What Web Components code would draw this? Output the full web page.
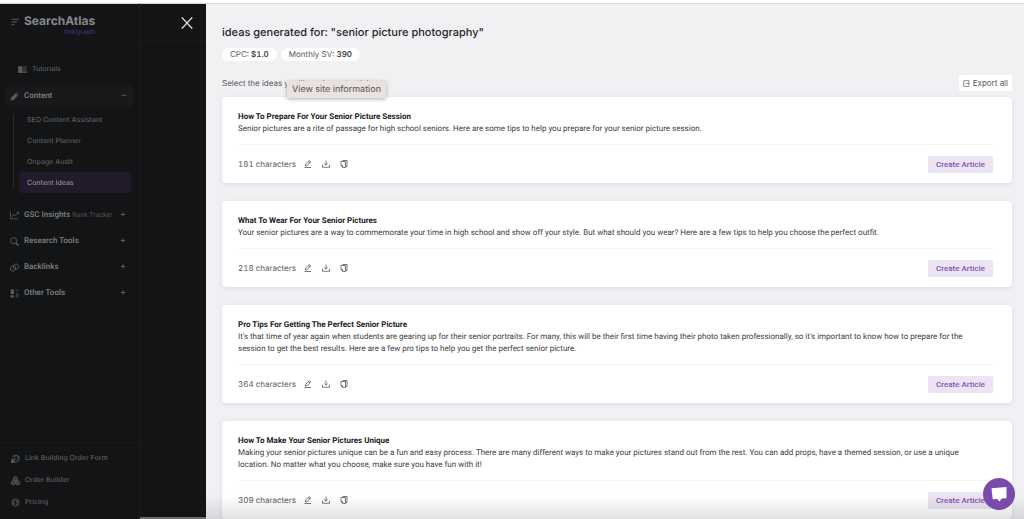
<!DOCTYPE html>
<html lang="en">
<head>
<meta charset="utf-8">
<title>SearchAtlas – Content Ideas</title>
<style>
  html, body { margin: 0; height: 100%; }
  body { --card-font: Roboto, Inter, sans-serif; background: #f1f1f4; font-family: Inter, "Liberation Sans", sans-serif; font-size: 8px; line-height: 12px; font-variant-numeric: tabular-nums; text-rendering: geometricPrecision; overflow: hidden; }
</style>
</head>
<body>
<app-shell>
  <side-nav slot="nav"></side-nav>
  <ideas-panel slot="panel"></ideas-panel>
  <chat-button slot="chat"></chat-button>
</app-shell>

<script>
const ICONS = {
  menu: '<path d="M1 2.500h15M1 8h11M1 13.500h6" stroke-width="2.200"/>',
  book: '<path d="M1 3h6v10H1z" fill="currentColor"/><path d="M9 3h6v10H9z" fill="currentColor" opacity=".45"/><path d="M0 13h16"/>',
  pencil: '<path d="M1 15l1-5 8-8 4 4-8 8zM11 1l1-1 4 4-1 1z" fill="currentColor" stroke="none"/>',
  chart: '<path d="M1 1v13h14M4 10l3-4 3 2 5-6M12 2h3v3"/>',
  search: '<circle cx="6.500" cy="6.500" r="5.500"/><path d="M10.500 10.500l5 5" stroke-width="2.600"/>',
  link: '<ellipse cx="5.500" cy="9.500" rx="4.500" ry="5" transform="rotate(25 5.500 9)"/><ellipse cx="10.500" cy="6.500" rx="4.500" ry="5" transform="rotate(25 10.500 7)"/>',
  blocks: '<path d="M1 1h6v8H1zM1 11h6v4H1z" fill="currentColor" stroke="none"/><path d="M10 1h5v3h-5zM10 7h5v8h-5z" fill="currentColor" stroke="none" opacity=".45"/>',
  order: '<path d="M3 6a6 6 0 1 1 6 8M6 6a3.500 3.500 0 1 1 4 4"/><path d="M1 15l1-6 5 5zM5 11l3-3" fill="currentColor" stroke-width="2"/>',
  cubes: '<path d="M8 1l3.500 2v4L8 9 4.500 7V3zM4 8l3.500 2v4L4 16 .5 14v-4zM12 8l3.500 2v4L12 16l-3.500-2v-4z" fill="currentColor" fill-opacity=".5"/>',
  coin: '<circle cx="8" cy="8" r="7" fill="currentColor" stroke="none" opacity=".65"/><path d="M10.500 5.500C9 4 5.500 4.500 5.500 6.200c0 2.300 5 1.300 5 3.600 0 1.700-3.500 2.200-5 .7M8 3v10" stroke="#131416"/>',
  edit: '<path d="M2.500 12l.7-3.500L10.500 1.200 13.500 4.200 6.200 11.300zM8.800 3l3 3M1 15h13"/>',
  download: '<path d="M8 1v9M4.800 7L8 10.200 11.200 7M1 9.500v5h14v-5"/>',
  copy: '<path d="M5 1h9v12h-2.500M2 3h9v12H6L2 11.500z"/><path d="M2 11h4v4z" fill="currentColor" stroke="none"/>',
  exit: '<path d="M13.500 5V1.500h-12v13h12V11M6 8h9M12.500 5.500L15 8l-2.500 2.500"/>',
  close: '<path d="M1 .5l14 15M15 .5L1 15.500" stroke-width="1.900"/>',
  chat: '<path d="M.5 2.200L15.500 1v11.200l-4.800.4L8.400 15.500 6.300 13l-4.600.2z" fill="#fff" stroke="none"/>'
};

function define(name, css, html, setup) {
  const template = document.createElement('template');
  template.innerHTML = `<style>*{box-sizing:border-box}${css}</style>${html}`;
  customElements.define(name, class extends HTMLElement {
    constructor() {
      super();
      this.attachShadow({ mode: 'open' }).append(template.content.cloneNode(true));
    }
    connectedCallback() { if (setup) setup.call(this, this.shadowRoot); }
  });
}

define('ui-icon', `
  :host { display: inline-flex; flex: none; width: 9px; height: 9px; }
  svg { width: 100%; height: 100%; fill: none; stroke: currentColor; stroke-width: 1.500; overflow: visible; }`,
  '<svg viewBox="0 0 16 16" aria-hidden="true"></svg>',
  function (root) { root.querySelector('svg').innerHTML = ICONS[this.getAttribute('name')]; });

define('nav-item', `
  :host { display: block; min-width: 0; color: #7f8082; font-family: var(--card-font); font-weight: 500; }
  a { display: flex; align-items: center; gap: 5px; height: 22px; padding: 0 7px 0 5px; border-radius: 3px; color: inherit; text-decoration: none; white-space: nowrap; }
  .mark { margin-left: auto; font: 400 9px/12px Inter, sans-serif; color: #68696b; }
  :host([open]) a { background: #19191b; }
  :host([quiet]), :host([plain]) { color: #5b5c5e; font-family: Inter, sans-serif; font-size: 7px; }
  :host([quiet]) a { padding-left: 6px; }
  :host([plain]) a { height: 21px; padding: 0 8px; }
  :host([current]) { color: #908d97; }
  :host([current]) a { background: #211b2b; }
  ui-icon { color: #5b5c5e; }
  small { font: 400 7px/12px var(--card-font); color: #505153; margin: 0 -3px; }`,
  '<a href="#"><slot></slot></a>',
  function (root) {
    const link = root.querySelector('a');
    if (this.hasAttribute('icon')) {
      const icon = document.createElement('ui-icon');
      icon.setAttribute('name', this.getAttribute('icon'));
      link.prepend(icon);
    }
    if (this.hasAttribute('note')) {
      const note = document.createElement('small');
      note.textContent = this.getAttribute('note');
      link.append(note);
    }
    if (this.hasAttribute('mark')) {
      const mark = document.createElement('span');
      mark.className = 'mark';
      mark.textContent = this.getAttribute('mark');
      link.append(mark);
    }
  });

define('side-nav', `
  :host { display: flex; flex-direction: column; min-height: 0; border-right: 1px solid #1a1b1d; }
  header { display: flex; align-items: flex-start; gap: 5px; padding: 10px 11px 0; }
  header ui-icon { margin-top: 4px; width: 8px; height: 8px; color: #5b5c5e; }
  .brand { display: grid; font: 700 12px/14px Inter, sans-serif; color: #868789; }
  .brand span { font: 500 7px/7px Inter, sans-serif; color: #47297a; text-align: right; }
  nav { display: grid; grid-template-columns: minmax(0, 1fr); padding: 23px 6px 0 5px; }
  .top { padding-left: 7px; margin-bottom: 5px; }
  .sub { display: grid; margin: 2px 2px 11px 8px; padding-left: 6px; position: relative; }
  .sub::before { content: ""; position: absolute; left: 0; top: 5px; bottom: 5px; border-left: 1px solid #2a2b2d; }
  .groups { display: grid; grid-template-columns: minmax(0, 1fr); gap: 4px; }
  footer { display: grid; margin-top: auto; padding: 4px 5px 6px; border-top: 1px solid #1a1b1d; }`,
  `<header><ui-icon name="menu"></ui-icon><div class="brand">SearchAtlas<span>linkgraph</span></div></header>
   <nav aria-label="Main">
     <nav-item class="top" quiet icon="book">Tutorials</nav-item>
     <nav-item open icon="pencil" mark="–">Content</nav-item>
     <div class="sub">
       <nav-item plain>SEO Content Assistant</nav-item>
       <nav-item plain>Content Planner</nav-item>
       <nav-item plain>Onpage Audit</nav-item>
       <nav-item plain current>Content Ideas</nav-item>
     </div>
     <div class="groups">
       <nav-item icon="chart" note="Rank Tracker" mark="+">GSC Insights</nav-item>
       <nav-item icon="search" mark="+">Research Tools</nav-item>
       <nav-item icon="link" mark="+">Backlinks</nav-item>
       <nav-item icon="blocks" mark="+">Other Tools</nav-item>
     </div>
   </nav>
   <footer>
     <nav-item quiet icon="order">Link Building Order Form</nav-item>
     <nav-item quiet icon="cubes">Order Builder</nav-item>
     <nav-item quiet icon="coin">Pricing</nav-item>
   </footer>`);

define('idea-card', `
  :host { display: block; background: #fff; border-radius: 4px; padding: 14px 19px 0 16px; box-shadow: 0 1px 4px #d9d8e6; color: #3d3e42; }
  h2 { margin: 0; font: 700 8px/12px var(--card-font); color: #202125; }
  p { margin: 0 20px 9px 0; font-family: var(--card-font); }
  .row { display: flex; align-items: center; border-top: 1px solid #f3f3f5; height: 39px; }
  .count { margin-right: 8px; color: #56575b; }
  .tool { display: inline-flex; border: 0; background: none; padding: 0; margin-right: 10px; color: #4b4c50; }
  .tool ui-icon { width: 8px; height: 8px; }
  .create { margin-left: auto; border: 0; border-radius: 2px; background: #ebe4f2; color: #8551b4; font: 500 8px/17px var(--card-font); padding: 0 8px; }`,
  `<h2><slot name="title"></slot></h2><p><slot></slot></p>
   <div class="row"><span class="count"></span>
     <button class="tool" aria-label="Edit"><ui-icon name="edit"></ui-icon></button>
     <button class="tool" aria-label="Download"><ui-icon name="download"></ui-icon></button>
     <button class="tool" aria-label="Copy"><ui-icon name="copy"></ui-icon></button>
     <button class="create">Create Article</button></div>`,
  function (root) { root.querySelector('.count').textContent = this.getAttribute('count') + ' characters'; });

define('ideas-panel', `
  :host { display: block; background: #f1f1f4; padding: 21px 12px 0 16px; overflow: hidden; color: #56575b; }
  h1 { margin: 0; font-size: 11px; line-height: 14px; font-weight: 500; color: #242529; }
  .pills { display: flex; gap: 4px; margin-top: 9px; }
  .pills span { background: #fff; border-radius: 7px; line-height: 13px; padding: 0 8px; }
  b { font-weight: 600; color: #45464a; }
  .bar { display: flex; justify-content: space-between; align-items: center; margin: 14px 0 6px; }
  .hint { position: relative; }
  .tip { position: absolute; left: 65px; top: 4px; padding: 0 5px; font-size: 9px; line-height: 17px; background: #e9e2df; color: #56504e; box-shadow: 0 1px 4px #aaa; white-space: nowrap; }
  .export { display: flex; align-items: center; gap: 3px; border: 0; border-radius: 2px; background: #fff; color: #56575b; font: 400 8px/16px Inter, sans-serif; padding: 0 4px; }
  .export ui-icon { width: 7px; height: 7px; }
  .list { display: grid; gap: 18px; }`,
  `<h1>ideas generated for: "senior picture photography"</h1>
   <div class="pills"><span>CPC: <b>$1.0</b></span><span>Monthly SV: <b>390</b></span></div>
   <div class="bar"><div class="hint">Select the ideas you'll use in next articles.<div class="tip" role="tooltip">View site information</div></div>
     <button class="export"><ui-icon name="exit"></ui-icon>Export all</button></div>
   <div class="list">
     <idea-card count="181"><span slot="title">How To Prepare For Your Senior Picture Session</span>Senior pictures are a rite of passage for high school seniors. Here are some tips to help you prepare for your senior picture session.</idea-card>
     <idea-card count="218"><span slot="title">What To Wear For Your Senior Pictures</span>Your senior pictures are a way to commemorate your time in high school and show off your style. But what should you wear? Here are a few tips to help you choose the perfect outfit.</idea-card>
     <idea-card count="364"><span slot="title">Pro Tips For Getting The Perfect Senior Picture</span>It's that time of year again when students are gearing up for their senior portraits. For many, this will be their first time having their photo taken professionally, so it's important to know how to prepare for the session to get the best results. Here are a few pro tips to help you get the perfect senior picture.</idea-card>
     <idea-card count="309"><span slot="title">How To Make Your Senior Pictures Unique</span>Making your senior pictures unique can be a fun and easy process. There are many different ways to make your pictures stand out from the rest. You can add props, have a themed session, or use a unique location. No matter what you choose, make sure you have fun with it!</idea-card>
   </div>`);

define('chat-button', `
  :host { display: block; }
  button { display: grid; place-items: center; width: 32px; height: 32px; border: 0; border-radius: 50%; background: #7b4bab; padding: 0; }
  ui-icon { width: 16px; height: 16px; }`,
  '<button aria-label="Chat"><ui-icon name="chat"></ui-icon></button>');

define('app-shell', `
  :host { display: grid; box-sizing: border-box; grid-template-columns: 140px 66px minmax(0, 1fr); grid-template-rows: minmax(0, 1fr); height: 100vh; border-top: 3px solid #fff; background: #131416; overflow: hidden; }
  ::slotted(side-nav), ::slotted(ideas-panel), .gutter { border-top: 1px solid #d8d8da; }
  .gutter { display: flex; flex-direction: column; justify-content: space-between; background: #131416; }
  .head { display: flex; height: 38px; border-bottom: 1px solid #1a1b1d; justify-content: flex-end; align-items: center; padding-right: 13px; }
  .close { display: flex; border: 0; padding: 0; background: none; color: #e6e6e6; }
  .close ui-icon { width: 12px; height: 12px; }
  .scroll { height: 2px; background: #6c6c6e; }
  .fade { position: fixed; left: 206px; right: 0; bottom: 0; height: 24px; background: linear-gradient(transparent, #0000001c); }
  .chat { position: fixed; right: 9px; bottom: 9px; }`,
  `<slot name="nav"></slot>
   <div class="gutter"><div class="head"><button class="close" aria-label="Close"><ui-icon name="close"></ui-icon></button></div><div class="scroll"></div></div>
   <slot name="panel"></slot><div class="fade"></div><div class="chat"><slot name="chat"></slot></div>`);
</script>
</body>
</html>
